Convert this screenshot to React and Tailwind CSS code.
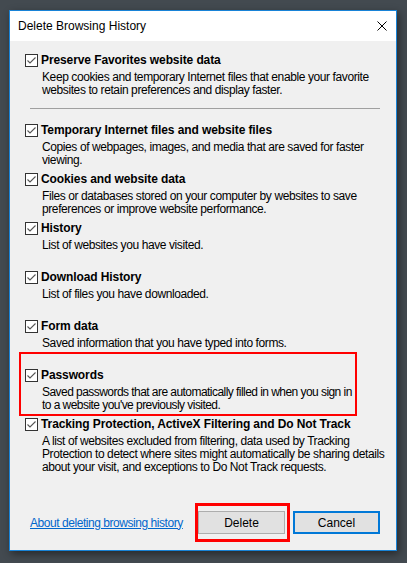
import React from 'react'

const items = [
  {
    title: 'Temporary Internet files and website files',
    lines: ['Copies of webpages, images, and media that are saved for faster', 'viewing.'],
  },
  {
    title: 'Cookies and website data',
    lines: ['Files or databases stored on your computer by websites to save', 'preferences or improve website performance.'],
  },
  { title: 'History', lines: ['List of websites you have visited.'] },
  { title: 'Download History', lines: ['List of files you have downloaded.'] },
  { title: 'Form data', lines: ['Saved information that you have typed into forms.'] },
  {
    title: 'Passwords',
    lines: ['Saved passwords that are automatically filled in when you sign in', "to a website you've previously visited."],
    highlight: true,
  },
  {
    title: 'Tracking Protection, ActiveX Filtering and Do Not Track',
    lines: [
      'A list of websites excluded from filtering, data used by Tracking',
      'Protection to detect where sites might automatically be sharing details',
      'about your visit, and exceptions to Do Not Track requests.',
    ],
  },
]

function Checkbox() {
  return (
    <div className="w-[13px] h-[13px] border border-[#333333] bg-white mt-[2px] shrink-0">
      <svg width="11" height="11" viewBox="0 0 11 11" className="block">
        <polyline points="1.5,5.5 4,8 9.5,2.5" fill="none" stroke="#555555" strokeWidth="1.1" />
      </svg>
    </div>
  )
}

function Option({ title, lines, highlight }) {
  return (
    <div className="relative flex">
      {highlight && (
        <div className="absolute -left-[6px] -top-[15px] w-[338px] h-[64px] border-2 border-[#ff0000]" />
      )}
      <div className="w-[16px] shrink-0">
        <Checkbox />
      </div>
      <div>
        <div className="font-bold leading-[16px] tracking-[-0.1px] whitespace-nowrap">{title}</div>
        <div className={highlight ? 'mt-[3px] pl-[1px] leading-[13px] tracking-[-0.55px]' : 'mt-[3px] pl-[1px] leading-[13px] tracking-[-0.4px]'}>
          {lines.map((l) => (
            <div key={l} className="whitespace-nowrap">{l}</div>
          ))}
        </div>
      </div>
    </div>
  )
}

export default function App() {
  return (
    <div className="w-[407px] h-[563px] overflow-hidden bg-[#434a50] pt-[10px] pl-[9px] font-['Liberation_Sans',Arial,sans-serif] text-[12px] text-black">
      <div className="w-[388px] h-[541px] border border-[#1883d7] bg-[#f0f0f0] flex flex-col shadow-[2px_3px_8px_rgba(0,0,0,0.45)]">
        <div className="h-[30px] bg-white flex items-center justify-between pl-[8px] pr-[9px] shrink-0">
          <span className="leading-[16px]">Delete Browsing History</span>
          <svg width="10" height="10" viewBox="0 0 10 10">
            <path d="M0.5 0.5 L9.5 9.5 M9.5 0.5 L0.5 9.5" stroke="#000" strokeWidth="1" />
          </svg>
        </div>

        <div className="flex-1 flex flex-col pt-[11px] pl-[15px] pr-[16px] pb-[16px]">
          <Option
            title="Preserve Favorites website data"
            lines={['Keep cookies and temporary Internet files that enable your favorite', 'websites to retain preferences and display faster.']}
          />
          <div className="ml-[5px] mt-[11px] h-px bg-[#a0a0a0]" />

          <div className="mt-[13px] flex flex-col">
            {items.map((it) => (
              <div key={it.title} className="h-[49px]">
                <Option {...it} />
              </div>
            ))}
          </div>

          <div className="mt-auto flex items-center justify-between">
            <a href="#" className="ml-[5px] text-[#0066cc] underline tracking-[-0.45px]">About deleting browsing history</a>
            <div className="flex gap-[8px]">
              <div className="relative">
                <div className="absolute -left-[3px] -top-[8px] w-[95px] h-[39px] border-[3px] border-[#ff0000]" />
                <button className="w-[87px] h-[23px] border border-[#adadad] bg-[#e1e1e1]">Delete</button>
              </div>
              <button className="w-[87px] h-[23px] border-2 border-[#0078d7] bg-[#e1e1e1]">Cancel</button>
            </div>
          </div>
        </div>
      </div>
    </div>
  )
}
